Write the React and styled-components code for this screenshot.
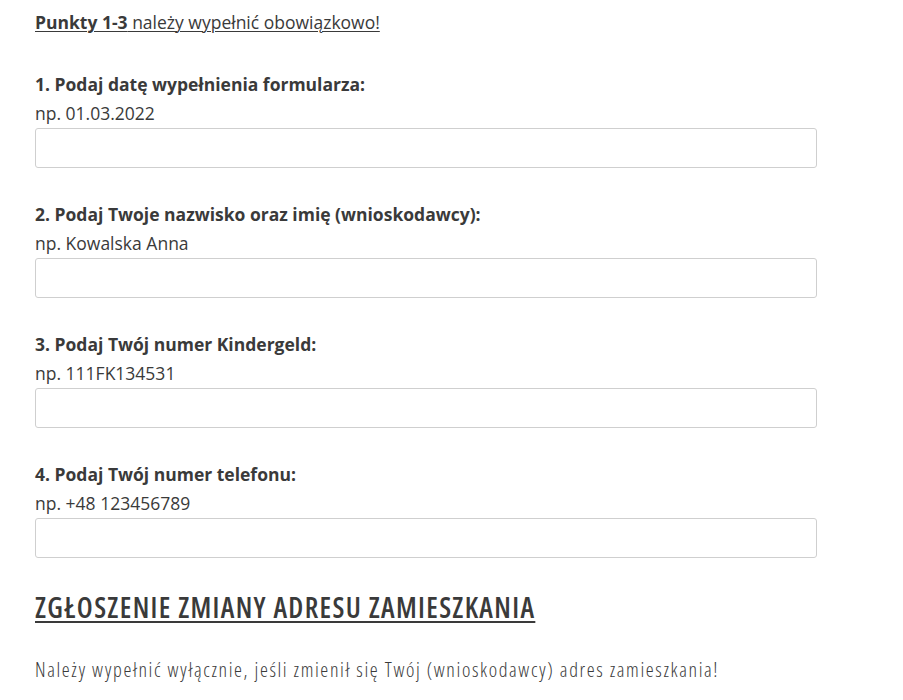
import React from "react";
import styled, { createGlobalStyle } from "styled-components";

const Global = createGlobalStyle`
  html, body { margin: 0; padding: 0; background: #fff; }
  body {
    font-family: "Open Sans", "Noto Sans", sans-serif;
    color: #3a3a3a;
    font-size: 17.5px;
  }
`;

const Form = styled.form`
  width: 782px;
  padding: 8px 0 0 35px;
  display: flex;
  flex-direction: column;
`;

const Notice = styled.p`
  margin: 0 0 33px;
  line-height: 29px;
  font-weight: 400;
  text-decoration: underline;
  text-decoration-thickness: 1px;
  text-underline-offset: 2px;
  b { font-weight: 700; }
`;

const Field = styled.div`
  display: flex;
  flex-direction: column;
  margin-bottom: 32px;
`;

const Label = styled.label`
  font-weight: 700;
  line-height: 29px;
`;

const Hint = styled.span`
  line-height: 29px;
  font-weight: 400;
`;

const Input = styled.input`
  box-sizing: border-box;
  height: 40px;
  width: 100%;
  border: 1px solid #cfcfcf;
  border-radius: 3px;
  background: #fff;
  font: inherit;
  padding: 0 10px;
  outline: none;
`;

const Heading = styled.h2`
  margin: 0;
  font-size: 28px;
  font-weight: 600;
  line-height: 34px;
  font-stretch: 75%;
  letter-spacing: 1.35px;
  text-decoration: underline;
  text-underline-offset: 3px;
  text-decoration-thickness: 2px;
`;

const Note = styled.p`
  margin: 31px 0 0;
  font-size: 20px;
  font-weight: 300;
  font-stretch: 75%;
  letter-spacing: 1.62px;
  line-height: 30px;
`;

const fields = [
  { id: "data", label: "1. Podaj datę wypełnienia formularza:", hint: "np. 01.03.2022" },
  { id: "nazwisko", label: "2. Podaj Twoje nazwisko oraz imię (wnioskodawcy):", hint: "np. Kowalska Anna" },
  { id: "kindergeld", label: "3. Podaj Twój numer Kindergeld:", hint: "np. 111FK134531" },
  { id: "telefon", label: "4. Podaj Twój numer telefonu:", hint: "np. +48 123456789" },
];

export default function App() {
  return (
    <>
      <Global />
      <Form onSubmit={(e) => e.preventDefault()}>
        <Notice>
          <b>Punkty 1-3</b> należy wypełnić obowiązkowo!
        </Notice>
        {fields.map((f) => (
          <Field key={f.id}>
            <Label htmlFor={f.id}>{f.label}</Label>
            <Hint>{f.hint}</Hint>
            <Input id={f.id} type="text" />
          </Field>
        ))}
        <Heading>ZGŁOSZENIE ZMIANY ADRESU ZAMIESZKANIA</Heading>
        <Note>Należy wypełnić wyłącznie, jeśli zmienił się Twój (wnioskodawcy) adres zamieszkania!</Note>
      </Form>
    </>
  );
}
